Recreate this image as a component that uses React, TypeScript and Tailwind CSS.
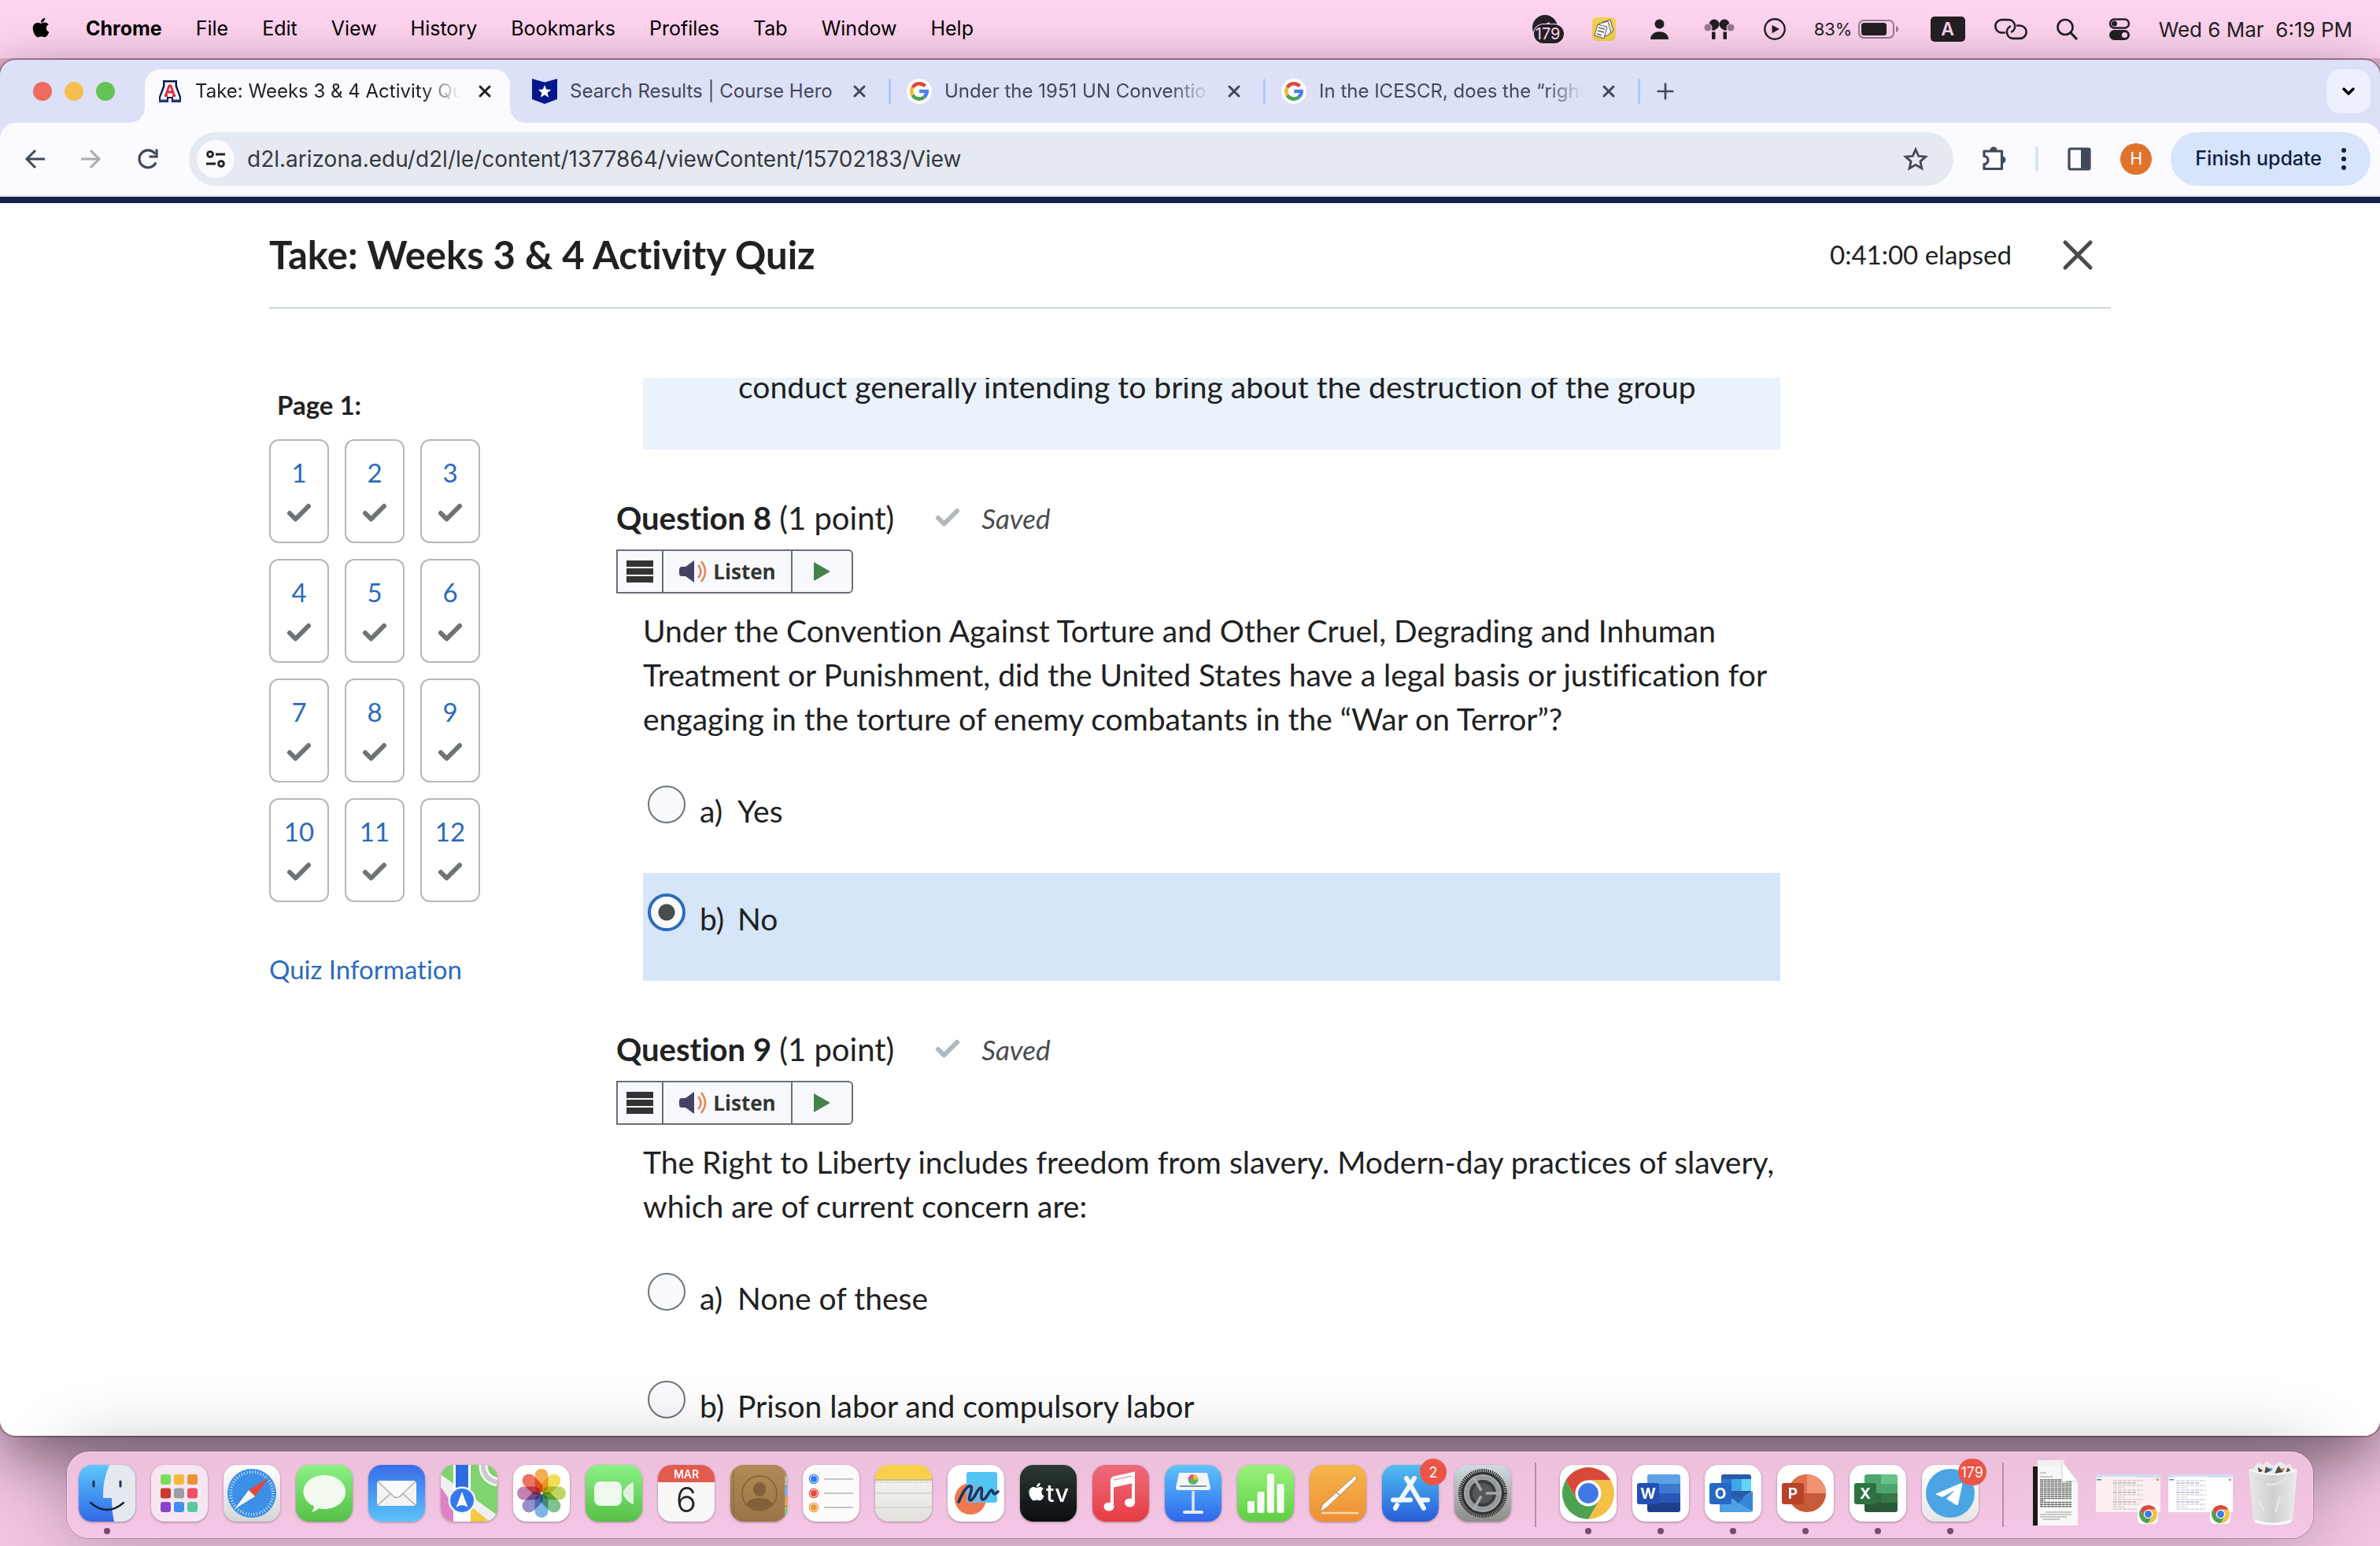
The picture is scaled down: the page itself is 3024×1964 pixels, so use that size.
import type { ReactNode } from "react";
import { Check, ChevronDown, Plus, X } from "lucide-react";
import { FaApple } from "react-icons/fa";
import clsx from "clsx";

const menuItems = ["File", "Edit", "View", "History", "Bookmarks", "Profiles", "Tab", "Window", "Help"];

/* ---------- Logos ---------- */

const GoogleLogo = () => (
  <svg viewBox="0 0 32 32" className="size-8 shrink-0">
    <circle cx="16" cy="16" r="16" fill="#fff" />
    <g fill="none" strokeWidth="4.6">
      <path d="M23.4 9.6A9.7 9.7 0 0 0 7.6 11.2" stroke="#db4a39" />
      <path d="M7.6 11.2A9.7 9.7 0 0 0 7.6 20.8" stroke="#f3b83b" />
      <path d="M7.6 20.8A9.7 9.7 0 0 0 22.4 23.2" stroke="#4ea258" />
      <path d="M22.4 23.2A9.7 9.7 0 0 0 25.7 16H16.2" stroke="#4a80ee" />
    </g>
  </svg>
);

const CourseHeroLogo = () => (
  <svg viewBox="0 0 32 32" className="size-8 shrink-0">
    <path d="M0 0l16 4.5L32 0v26l-16 6-16-6z" fill="#03178c" />
    <path d="M16 8l2.2 5.6 6 .4-4.600 3.800 1.500 5.900L16 20.400l-5.100 3.300 1.500-5.900L7.800 14l6-.4z" fill="#fff" />
  </svg>
);

const ArizonaLogo = () => (
  <svg viewBox="0 0 32 32" className="size-8 shrink-0">
    <path d="M7 2h18v7l5 14v7H18v-5h-4v5H2v-7L7 9z" fill="#0c1a4b" />
    <path d="M9.500 4.500h13v5l5.500 14.500v3h-8v-4h-8v4H4v-3L9.500 9.500z" fill="#f4f6fb" />
    <path d="M10.500 21.500L15 9h2l4.500 12.500M12 17h8M9 21.500h4M19 21.500h4" fill="none" stroke="#dc2f3c" strokeWidth="2.800" />
    <path d="M2 26.500h11v3H2zM19 26.500h11v3H19z" fill="#1e3f78" />
  </svg>
);

const ChromeLogo = ({ className }: { className?: string }) => (
  <svg viewBox="-24 -24 48 48" className={className}>
    <path d="M-19.050-11A22 22 0 0 1 19.050-11L0-11L-9.530 5.500Z" fill="#d8493a" />
    <path d="M-19.050-11A22 22 0 0 1 19.050-11L0-11L-9.530 5.500Z" fill="#f5c043" transform="rotate(120)" />
    <path d="M-19.050-11A22 22 0 0 1 19.050-11L0-11L-9.530 5.500Z" fill="#4da251" transform="rotate(240)" />
    <circle r="11" fill="#fff" />
    <circle r="8.600" fill="#4079e6" />
  </svg>
);

/* ---------- Menu bar ---------- */

const MenuBar = () => (
  <header className="flex h-[74px] shrink-0 items-center bg-[#ffd4f0] pl-[38px] pr-[35px] text-[25px] text-black">
    <nav className="flex items-center gap-[43px]">
      <FaApple className="mb-1 size-7" />
      <span className="font-bold">Chrome</span>
      {menuItems.map((item) => (
        <span key={item}>{item}</span>
      ))}
    </nav>
    <div className="ml-auto flex items-center gap-9 text-[#231f23]">
      {/* Telegram with unread count */}
      <div className="relative h-9 w-10">
        <svg viewBox="0 0 40 36" className="h-9 w-10">
          <circle cx="16" cy="16" r="16" fill="#231f23" />
          <path d="M12 13l10-4-1 5z" fill="#ffd4f0" />
          <rect x="1" y="11" width="40" height="27" rx="13" fill="#ffd4f0" />
          <rect x="2" y="12" width="38" height="24" rx="12" fill="#231f23" />
        </svg>
        <span className="absolute inset-x-0 top-3 text-center text-[20px] leading-6 text-[#ffd4f0]">179</span>
      </div>
      <svg viewBox="0 0 30 30" className="size-[30px]">
        <rect width="30" height="30" rx="6" fill="#f8d24f" />
        <path d="M13 6l10-3 4 14-6 5z" fill="#eee" stroke="#555" strokeWidth="1" />
        <path d="M9 8l11-3 4 15-7 4z" fill="#fff" stroke="#555" strokeWidth="1" />
        <path d="M7 9l12 3-4 15-12-4z" fill="#fff" stroke="#555" strokeWidth="1" />
        <path d="M8 13l8 2M7 17l8 2M6 21l6 2" stroke="#666" strokeWidth="1.400" />
      </svg>
      <svg viewBox="0 0 39 28" className="h-7 w-[39px]" fill="#231f23">
        <circle cx="19.500" cy="7.500" r="6" />
        <path d="M8 27c0-13 23-13 23 0z" />
      </svg>
      <svg viewBox="0 0 41 28" className="h-7 w-[41px]">
        <g>
          <circle cx="14" cy="8" r="6.500" fill="#231f23" />
          <rect x="11" y="8" width="4.500" height="19" rx="1.500" fill="#231f23" />
          <path d="M10.500 16.500h5.500" stroke="#ffd4f0" strokeWidth="2" />
          <circle cx="6" cy="12" r="5" fill="#997a90" stroke="#ffd4f0" />
        </g>
        <g transform="translate(41 0) scale(-1 1)">
          <circle cx="14" cy="8" r="6.500" fill="#231f23" />
          <rect x="11" y="8" width="4.500" height="19" rx="1.500" fill="#231f23" />
          <path d="M10.500 16.500h5.500" stroke="#ffd4f0" strokeWidth="2" />
          <circle cx="6" cy="12" r="5" fill="#997a90" stroke="#ffd4f0" />
        </g>
      </svg>
      <svg viewBox="0 0 28 28" className="size-7">
        <circle cx="14" cy="14" r="12.700" fill="none" stroke="#231f23" strokeWidth="2.400" />
        <path d="M10.500 8.800v10.400l9.500-5.200z" fill="#231f23" />
      </svg>
      <div className="flex w-28 items-center justify-between">
        <span className="text-[22px]">83%</span>
        <svg viewBox="0 0 52 24" className="mr-1 h-6 w-[52px]">
          <rect x="1" y="1" width="44" height="22" rx="6" fill="none" stroke="#997a90" strokeWidth="2" />
          <rect x="4" y="4" width="32" height="16" rx="3.500" fill="#231f23" />
          <path d="M48 8c4 1 4 7 0 8z" fill="#997a90" />
        </svg>
      </div>
      <span className="flex h-8 w-11 items-center justify-center rounded-[5px] bg-[#231f23] text-[23px] font-semibold text-[#ffd4f0]">A</span>
      <svg viewBox="0 0 44 28" className="h-7 w-11" fill="none" stroke="#231f23" strokeWidth="2.600" strokeLinecap="round">
        <path d="M14 18.500H10.500a8.200 8.200 0 0 1 0-16.400H19a8.200 8.200 0 0 1 4 15.300" />
        <path d="M30 9.500h3.500a8.200 8.200 0 0 1 0 16.400H25a8.200 8.200 0 0 1-4-15.300" />
      </svg>
      <svg viewBox="0 0 30 28" className="h-7 w-[30px]" fill="none" stroke="#231f23" strokeLinecap="round">
        <circle cx="11" cy="11.500" r="9.500" strokeWidth="2.600" />
        <path d="M18 18.500l7 7.500" strokeWidth="3.200" />
      </svg>
      <svg viewBox="0 0 28 28" className="size-7">
        <rect x="2" y="1.500" width="24" height="11" rx="5.500" fill="none" stroke="#231f23" strokeWidth="2.400" />
        <circle cx="7.500" cy="7" r="3.500" fill="#231f23" />
        <rect x="1" y="15" width="26" height="13" rx="6.500" fill="#231f23" />
        <circle cx="20.500" cy="21.500" r="3.600" fill="#ffd4f0" />
      </svg>
      <span className="whitespace-pre text-[26px]">Wed 6 Mar  6:19 PM</span>
    </div>
  </header>
);

/* ---------- Browser chrome ---------- */

type TabProps = { icon: ReactNode; title: string; active?: boolean; fade?: boolean };

const Tab = ({ icon, title, active, fade }: TabProps) => (
  <div
    className={clsx(
      "relative flex h-[68px] shrink-0 items-center gap-4 pb-3",
      active ? "mr-2 w-[464px] rounded-t-[20px] bg-[#fafaff] pl-4 text-[#1f2024]" : "w-[476px] pl-5 text-[#42475a]"
    )}
  >
    {active && (
      <>
        <span className="absolute -left-5 bottom-0 size-5 bg-[radial-gradient(circle_at_0_0,transparent_20px,#fafaff_20px)]" />
        <span className="absolute -right-5 bottom-0 size-5 bg-[radial-gradient(circle_at_100%_0,transparent_20px,#fafaff_20px)]" />
      </>
    )}
    {icon}
    <span className={clsx("w-[336px] overflow-hidden whitespace-nowrap text-[24px]", fade && "mask-r-from-[86%] mask-r-to-[100%]")}>
      {title}
    </span>
    <button aria-label={`Close ${title}`} className="flex size-8 items-center justify-center">
      <X className="size-6" strokeWidth={3} />
    </button>
    {!active && <span className="ml-auto h-8 w-[3px] rounded-full bg-[#b0c8fb]" />}
  </div>
);

const TabStrip = () => (
  <div className="flex h-20 shrink-0 items-end bg-[#dce1f7] pl-[42px] pr-3">
    <div className="mr-[38px] flex h-[68px] items-center gap-4 pb-3">
      <button aria-label="Close window" className="size-6 rounded-full bg-[#ed6b5f]" />
      <button aria-label="Minimize window" className="size-6 rounded-full bg-[#f5bf4f]" />
      <button aria-label="Zoom window" className="size-6 rounded-full bg-[#62c454]" />
    </div>
    <Tab active fade icon={<ArizonaLogo />} title="Take: Weeks 3 & 4 Activity Qu" />
    <Tab icon={<CourseHeroLogo />} title="Search Results | Course Hero" />
    <Tab fade icon={<GoogleLogo />} title="Under the 1951 UN Conventio" />
    <Tab fade icon={<GoogleLogo />} title="In the ICESCR, does the “right" />
    <button aria-label="New tab" className="ml-4 flex h-[68px] items-center pb-3 text-[#42475a]">
      <Plus className="size-8" strokeWidth={2} />
    </button>
    <button aria-label="Search tabs" className="mb-3 ml-auto flex size-14 items-center justify-center rounded-[18px] bg-[#edf0ff]">
      <ChevronDown className="size-6" strokeWidth={3.5} />
    </button>
  </div>
);

const Toolbar = () => (
  <div className="bg-[#dce1f7]">
    <div className="flex h-[94px] items-center rounded-t-[20px] border-b-2 border-[#dde1ea] bg-[#fafaff] pl-[30px] pr-3 text-[#41485b]">
      <button aria-label="Back" className="mr-10">
        <svg viewBox="0 0 30 30" className="size-[30px]" fill="none" stroke="#41485b" strokeWidth="3">
          <path d="M27 15H5M15 4L4 15l11 11" />
        </svg>
      </button>
      <button aria-label="Forward" className="mr-[42px]">
        <svg viewBox="0 0 30 30" className="size-[30px]" fill="none" stroke="#a8abb2" strokeWidth="3">
          <path d="M3 15h22M15 4l11 11-11 11" />
        </svg>
      </button>
      <button aria-label="Reload" className="mr-9">
        <svg viewBox="0 0 32 32" className="size-8" fill="none" stroke="#41485b" strokeWidth="3.200">
          <path d="M26 20.500A11 11 0 1 1 25 9.500" />
          <path d="M27 3.500v9.500h-9.500" />
        </svg>
      </button>
      <div className="flex h-[68px] flex-1 items-center rounded-full bg-[#e5e9f1] pl-2.5 pr-8">
        <button aria-label="View site information" className="mr-4 flex size-12 items-center justify-center rounded-full bg-[#fafaff]">
          <svg viewBox="0 0 26 26" className="size-[26px]" fill="none" stroke="#1f2024" strokeWidth="2.800">
            <circle cx="6" cy="7" r="3.400" />
            <path d="M13 7h12M1 19h12" />
            <circle cx="20" cy="19" r="3.400" />
          </svg>
        </button>
        <input
          aria-label="Address"
          className="min-w-0 flex-1 bg-transparent text-[28px] text-[#35383d] outline-none"
          defaultValue="d2l.arizona.edu/d2l/le/content/1377864/viewContent/15702183/View"
        />
        <button aria-label="Bookmark this tab">
          <svg viewBox="0 0 32 32" className="size-8" fill="none" stroke="#44474e" strokeWidth="2.800">
            <path d="M16 4l3.700 8.300 9 .8-6.800 6 2 8.900L16 23.300 8.100 28l2-8.900-6.800-6 9-.8z" />
          </svg>
        </button>
      </div>
      <button aria-label="Extensions" className="ml-9">
        <svg viewBox="0 0 36 36" className="size-9">
          <path d="M3 7h22.500v22.500H3V23.500a5 5 0 0 0 0-10z" transform="translate(0 1)" fill="none" stroke="#41485b" strokeWidth="3.200" strokeLinejoin="round" />
          <path d="M10.500 7a4.500 4.500 0 0 1 9 0zM26 14.500a4.500 4.500 0 0 1 0 9z" fill="#41485b" />
        </svg>
      </button>
      <span className="ml-8 h-8 w-1 rounded-full bg-[#d7e4fc]" />
      <button aria-label="Side panel" className="ml-9">
        <svg viewBox="0 0 32 32" className="size-8">
          <rect x="3" y="3" width="26" height="26" rx="2" fill="none" stroke="#41485b" strokeWidth="3.200" />
          <path d="M18 2h12v28H18z" fill="#41485b" />
        </svg>
      </button>
      <button className="ml-9 flex size-10 items-center justify-center rounded-full bg-[#df732b] text-[21px] text-white">H</button>
      <button className="ml-6 flex h-[68px] items-center gap-6 rounded-full bg-[#d7e4fc] pl-[31px] pr-[30px] text-[25px] font-medium text-[#0d1f45]">
        Finish update
        <svg viewBox="0 0 8 32" className="h-8 w-2" fill="#0d1f45">
          <circle cx="4" cy="5" r="3" />
          <circle cx="4" cy="16" r="3" />
          <circle cx="4" cy="27" r="3" />
        </svg>
      </button>
    </div>
  </div>
);

/* ---------- Quiz page ---------- */

const CheckMark = ({ className }: { className: string }) => <Check className={className} strokeWidth={4} />;

const QuizNav = () => (
  <aside className="w-[441px] shrink-0 pt-[15px]">
    <h2 className="ml-2.5 text-[33px] font-bold leading-[38px]">Page 1:</h2>
    <div className="mt-[25px] grid w-[268px] grid-cols-3 gap-5">
      {Array.from({ length: 12 }, (_, i) => (
        <button
          key={i}
          className="flex h-[132px] flex-col items-center rounded-[12px] border-2 border-[#b1b9be] pt-[18px] text-[33px] leading-[44px] text-[#2b6bbd]"
        >
          {i + 1}
          <CheckMark className="mt-3 size-9 text-[#6e7376]" />
        </button>
      ))}
    </div>
    <a href="#info" className="mt-[65px] block text-[33px] leading-10 text-[#2b6bbd]">
      Quiz Information
    </a>
  </aside>
);

const ListenBar = () => (
  <div className="mt-3 flex h-14 w-[301px] rounded-r-[6px] border-2 border-[#6a6f78] bg-[#f8f9fe]">
    <button aria-label="Listen menu" className="flex w-[58px] items-center justify-center border-r-2 border-[#6a6f78]">
      <svg viewBox="0 0 34 28" className="h-7 w-[34px]" fill="#333">
        <rect width="34" height="8" />
        <rect y="10" width="34" height="8" />
        <rect y="20" width="34" height="8" />
      </svg>
    </button>
    <button className="flex flex-1 items-center justify-center gap-1.5 border-r-2 border-[#6a6f78] font-['Open_Sans',sans-serif] text-[26px] font-bold text-[#333]">
      <svg viewBox="0 0 38 30" className="h-[30px] w-[38px]">
        <path d="M2 9h7l11-8v28l-11-8H4q-3 0-3-4v-4q0-4 3-4z" fill="#454263" />
        <path d="M25 7q7 8 0 16M29 2q10 13 0 26" fill="none" stroke="#e88457" strokeWidth="2.600" />
      </svg>
      Listen
    </button>
    <button aria-label="Play" className="flex w-[75px] items-center justify-center">
      <svg viewBox="0 0 21 24" className="h-6 w-[21px]">
        <path d="M0 0l21 12L0 24z" fill="#43824a" />
      </svg>
    </button>
  </div>
);

type Answer = { letter: string; text: string; checked?: boolean };

const Option = ({ name, letter, text, checked }: Answer & { name: string }) => (
  <label className={clsx("flex h-[137px] items-start pl-1.5", checked && "bg-[#d7e5f8]")}>
    <input
      type="radio"
      name={name}
      defaultChecked={checked}
      className="mt-[26px] size-12 shrink-0 appearance-none rounded-full border-2 border-[#6e7477] bg-[#f9fafe] checked:border-4 checked:border-[#2b6bbd] checked:bg-[radial-gradient(circle,#494c4e_10px,#f9fafe_11px)]"
    />
    <span className="ml-[18px] mt-[30px] w-12">{letter})</span>
    <span className="mt-[30px]">{text}</span>
  </label>
);

const Question = ({ number, text, answers }: { number: number; text: string; answers: Answer[] }) => (
  <article className="pt-[59px]">
    <div className="flex items-center">
      <h2 className="text-[40px] leading-[56px]">
        <strong className="font-bold">Question {number}</strong> (1 point)
      </h2>
      <CheckMark className="ml-[50px] size-9 text-[#b1b9be]" />
      <em className="ml-[25px] text-[35px] text-[#494c4e]">Saved</em>
    </div>
    <ListenBar />
    <div className="ml-[34px] mt-[19px]">
      <p className="mb-[31px]">{text}</p>
      {answers.map((answer) => (
        <Option key={answer.letter} name={`question-${number}`} {...answer} />
      ))}
    </div>
  </article>
);

const QuizPage = () => (
  <main className="flex min-h-0 flex-1 flex-col border-t-8 border-[#122347] bg-white font-[Lato,sans-serif] text-[#202122] [font-variant-ligatures:none]">
    <div className="mx-auto flex min-h-0 w-full max-w-[2340px] flex-1 flex-col">
      <div className="flex h-[134px] shrink-0 items-center border-b-2 border-[#cdd5dc] pr-[22px]">
        <h1 className="text-[49px] font-bold">Take: Weeks 3 &amp; 4 Activity Quiz</h1>
        <span className="ml-auto text-[33px]">0:41:00 elapsed</span>
        <button aria-label="Close" className="ml-16">
          <svg viewBox="0 0 40 40" className="size-10" stroke="#494c4e" strokeWidth="5" strokeLinecap="round">
            <path d="M4 4l32 32M36 4L4 36" />
          </svg>
        </button>
      </div>
      <div className="mt-[88px] flex min-h-0 flex-1">
        <QuizNav />
        <section className="min-w-0 flex-1 overflow-hidden pr-[420px] text-[39px] leading-[56px]">
          <div className="ml-[34px] flex h-[91px] flex-col justify-end overflow-hidden bg-[#eaf2fc] pb-[52px] pl-[121px]">
            <p>conduct generally intending to bring about the destruction of the group</p>
          </div>
          <Question
            number={8}
            text="Under the Convention Against Torture and Other Cruel, Degrading and Inhuman Treatment or Punishment, did the United States have a legal basis or justification for engaging in the torture of enemy combatants in the “War on Terror”?"
            answers={[
              { letter: "a", text: "Yes" },
              { letter: "b", text: "No", checked: true },
            ]}
          />
          <Question
            number={9}
            text="The Right to Liberty includes freedom from slavery. Modern-day practices of slavery, which are of current concern are:"
            answers={[
              { letter: "a", text: "None of these" },
              { letter: "b", text: "Prison labor and compulsory labor" },
            ]}
          />
        </section>
      </div>
    </div>
  </main>
);

/* ---------- Dock ---------- */

type DockIconProps = { bg?: string; running?: boolean; badge?: string; children: ReactNode };

const DockIcon = ({ bg = "bg-white", running, badge, children }: DockIconProps) => (
  <div className="relative flex h-full w-[92px] shrink-0 justify-center pt-4">
    <div className={clsx("size-[72px] overflow-hidden rounded-[17px] shadow-[0_1px_3px_rgba(0,0,0,0.35)]", bg)}>
      <svg viewBox="0 0 72 72" className="size-full">
        {children}
      </svg>
    </div>
    {running && <span className="absolute bottom-1 left-[42px] size-2 rounded-full bg-[#7a4a6c]" />}
    {badge && (
      <span className="absolute right-0 top-2 flex h-[34px] min-w-[34px] items-center justify-center rounded-full bg-[#ec5545] px-1 text-[18px] text-white">
        {badge}
      </span>
    )}
  </div>
);

const Divider = () => (
  <div className="flex h-full w-[42px] shrink-0 items-center justify-center">
    <span className="h-[82px] w-0.5 bg-[#b98aab]" />
  </div>
);

const petals = ["#f4a13c", "#f0d93f", "#b5cf4a", "#6cba7d", "#6cabe0", "#8a7fc8", "#bd6fa8", "#ea5f4c"];
const launchpad = ["#7bdc5c", "#f5b93c", "#ec9235", "#c93a2c", "#9a9ea3", "#ee4f67", "#8a44c8", "#3f8ff0", "#5cc8a0"];

const OfficeTile = ({ letter, color }: { letter: string; color: string }) => (
  <>
    <rect x="6" y="23" width="28" height="27" rx="3" fill={color} />
    <text x="20" y="43" textAnchor="middle" fill="#fff" fontSize="19" fontWeight="700">
      {letter}
    </text>
  </>
);

const Thumbnail = ({ bg, line, inset }: { bg: string; line: string; inset: number }) => (
  <div className="relative flex h-full w-[92px] shrink-0 items-start justify-center pt-7">
    <svg viewBox="0 0 82 48" className="h-12 w-[82px]">
      <rect width="82" height="48" fill={bg} />
      <rect width="82" height="4" fill="#cfdcf8" />
      <path d="M8 3.500h44" stroke="#f4f6fe" strokeWidth="1" />
      {Array.from({ length: 13 }, (_, i) => (
        <path key={i} d={`M${inset} ${8 + i * 3}h${i % 4 === 3 ? 14 : i % 2 ? 30 : 38}`} stroke={i % 4 === 1 ? line : "#c4bfc3"} strokeWidth="1" strokeDasharray="5 1" />
      ))}
      <rect x="1" y="6" width="6" height="1.500" fill="#5a7fd0" />
      <rect x="77" y="5.500" width="3" height="2.500" fill="#ec8544" />
    </svg>
    <span className="absolute right-2 top-[65px] flex size-[26px] items-center justify-center rounded-[6px] bg-white">
      <ChromeLogo className="size-[25px]" />
    </span>
  </div>
);

const Dock = () => (
  <footer className="relative z-10 mx-auto mb-2.5 mt-5 flex h-[110px] shrink-0 rounded-[28px] border border-[#f7d3ea] bg-linear-to-b from-[#ecc0db] to-[#f5c6e6] px-1 shadow-[0_0_0_1px_rgba(90,50,80,0.3),0_0_90px_rgba(0,0,0,0.28)]">
    <DockIcon running bg="bg-linear-to-b from-[#5fc6f9] to-[#3466e8]">
      <path d="M39 0h33v72H45q-3-13-3-30H31Q30 20 39 0z" fill="#e4e9f0" />
      <path d="M19 21v6M53 21v6" stroke="#26324a" strokeWidth="3" strokeLinecap="round" />
      <path d="M15 48q21 18 42 0" fill="none" stroke="#16202e" strokeWidth="2.400" strokeLinecap="round" />
    </DockIcon>
    <DockIcon bg="bg-[#f5e6f1]">
      {launchpad.map((color, i) => (
        <rect key={color} x={12 + (i % 3) * 17} y={12 + Math.floor(i / 3) * 17.5} width="13" height="13" rx="3" fill={color} />
      ))}
    </DockIcon>
    <DockIcon bg="bg-linear-to-b from-white to-[#d6d6d6]">
      <circle cx="36" cy="36" r="31" fill="#3c8fe6" />
      <circle cx="36" cy="36" r="27" fill="none" stroke="#cfe6fb" strokeWidth="4" strokeDasharray="1 2.530" />
      <path d="M58 16L40 40l-8-8z" fill="#e4473b" />
      <path d="M14 56l18-24 8 8z" fill="#f5f5f5" />
    </DockIcon>
    <DockIcon bg="bg-linear-to-b from-[#8bf184] to-[#55c046]">
      <path d="M36 13c15 0 27 9 27 21.500S51 56 36 56q-4 0-7-1-4 4-9 4.500 3-3 3-7C15 49 9.500 42 9.500 34.500 9.500 22 21 13 36 13z" fill="#f2faf0" />
    </DockIcon>
    <DockIcon bg="bg-linear-to-b from-[#3a6ce8] to-[#5cc3fa]">
      <rect x="11" y="20" width="50" height="32" rx="4" fill="#f4f4f4" />
      <path d="M12 51l19-17M60 51L41 34" stroke="#a9a9a9" strokeWidth="1.400" />
      <path d="M12 21l20 19q4 3 8 0l20-19" fill="#fbfbfb" stroke="#a9a9a9" strokeWidth="1.400" />
    </DockIcon>
    <DockIcon bg="bg-[#80d36e]">
      <path d="M0 12l72 52v8H0z" fill="#f0f0f4" />
      <path d="M0 28l30 44H0z" fill="#dd82c4" />
      <path d="M38 52l24 20H38z" fill="#f6c944" />
      <path d="M54 0q0 18 18 22" fill="none" stroke="#fff" strokeWidth="11" />
      <path d="M54 0q0 18 18 22" fill="none" stroke="#c9cbd2" strokeWidth="6" />
      <path d="M16 0h22v72H16z" fill="#fff" />
      <path d="M19 0h16v44H19z" fill="#2f6be0" />
      <circle cx="27" cy="45" r="17.500" fill="#f3f5fa" />
      <circle cx="27" cy="45" r="15" fill="#3478f0" />
      <path d="M27 34l7.500 20q-7.500-6-15 0z" fill="#fff" />
    </DockIcon>
    <DockIcon>
      {petals.map((color, i) => (
        <rect key={color} x="27.500" y="5" width="17" height="30" rx="8.500" fill={color} opacity="0.880" transform={`rotate(${i * 45} 36 36)`} className="mix-blend-multiply" />
      ))}
    </DockIcon>
    <DockIcon bg="bg-linear-to-b from-[#8bf184] to-[#55c046]">
      <rect x="11" y="21" width="35" height="31" rx="8" fill="#eef8ec" />
      <path d="M48 33q8-11 13-11v28q-5 0-13-11z" fill="#e0f2dc" />
    </DockIcon>
    <DockIcon bg="bg-[#f9f8f7]">
      <rect width="72" height="22" fill="#e25b4e" />
      <text x="36" y="17" textAnchor="middle" fill="#fff" fontSize="14" fontWeight="600">MAR</text>
      <text x="36" y="60" textAnchor="middle" fill="#222" fontSize="44" fontWeight="300">6</text>
    </DockIcon>
    <DockIcon bg="bg-linear-to-b from-[#b08b56] to-[#9a7446]">
      <path d="M4 0v72" stroke="#86643a" strokeWidth="1" />
      <circle cx="37" cy="36" r="22" fill="none" stroke="#82603a" strokeWidth="1.600" />
      <ellipse cx="37" cy="31" rx="8" ry="9" fill="#82603a" />
      <path d="M20 50q4-8 17-8t17 8q-7 8-17 8t-17-8z" fill="#82603a" />
      <path d="M69 14h3v12h-3z" fill="#b9b9b9" />
      <path d="M69 27h3v12h-3z" fill="#5fb6ee" />
      <path d="M69 40h3v12h-3z" fill="#f09a3c" />
      <path d="M69 53h3v10h-3z" fill="#72d068" />
    </DockIcon>
    <DockIcon bg="bg-[#fcfbfa]">
      {["#3478f0", "#e5493c", "#ee9a36"].map((color, i) => (
        <g key={color}>
          <circle cx="14" cy={18 + i * 18} r="5.600" fill="none" stroke={color} strokeWidth="1.200" />
          <circle cx="14" cy={18 + i * 18} r="4" fill={color} />
          <path d={`M27 ${18 + i * 18}h37`} stroke="#b4b4b4" strokeWidth="1.600" />
        </g>
      ))}
    </DockIcon>
    <DockIcon bg="bg-linear-to-b from-[#f8f7f4] to-[#e2e1da]">
      <rect width="72" height="18" fill="#f7cf4a" />
      <path d="M0 19h72" stroke="#b8a777" strokeWidth="1.600" />
      <path d="M0 22h72" stroke="#b5b3ac" strokeWidth="1.400" strokeDasharray="1.200 1.800" />
      <path d="M0 36h72M0 54h72" stroke="#d2d1cc" strokeWidth="1.400" />
    </DockIcon>
    <DockIcon>
      <circle cx="29" cy="43" r="20" fill="#f0774e" />
      <rect x="24" y="9" width="39" height="39" rx="3" fill="#52c5f3" />
      <path d="M24 24a20 20 0 0 1 24 24H27q-3 0-3-3z" fill="#7cb2e0" />
      <path d="M14 47c6-14 11-21 15-20 5 1-5 18 0 18s9-16 13-16-2 15 3 15 8-13 11-12 0 9 8 2" fill="none" stroke="#17365f" strokeWidth="3.600" strokeLinecap="round" />
    </DockIcon>
    <DockIcon bg="bg-linear-to-b from-[#2c3a37] to-[#0b0e10]">
      <g transform="translate(8 21)">
        <FaApple size={26} color="#fff" />
      </g>
      <text x="33" y="47" fill="#fff" fontSize="31" fontWeight="500">tv</text>
    </DockIcon>
    <DockIcon bg="bg-linear-to-b from-[#ee6a7a] to-[#e63a42]">
      <path d="M25 17l27-6v37" fill="none" stroke="#fff" strokeWidth="4" />
      <path d="M25 20l27-6v9l-27 6z" fill="#fff" />
      <path d="M25 17v36" stroke="#fff" strokeWidth="4" />
      <ellipse cx="21" cy="53" rx="6.500" ry="5.500" fill="#fff" />
      <ellipse cx="47.500" cy="48" rx="6.500" ry="5.500" fill="#fff" />
    </DockIcon>
    <DockIcon bg="bg-linear-to-b from-[#5fc2f8] to-[#3266ec]">
      <path d="M18 10h36l4 19q0 3-3 3H17q-3 0-3-3z" fill="#f3f5f8" />
      <path d="M19 27h34" stroke="#8294a8" strokeWidth="2" />
      <circle cx="36" cy="18.500" r="6.500" fill="#55b957" />
      <path d="M36 18.500V12a6.500 6.500 0 0 1 6.500 6.500z" fill="#f0b93c" />
      <path d="M36 18.500V12a6.500 6.500 0 0 0-6.500 6.500z" fill="#e0558a" />
      <path d="M36 33v26" stroke="#dfe3e8" strokeWidth="3.600" />
      <path d="M25 60h22" stroke="#e9ecf0" strokeWidth="4" strokeLinecap="round" />
    </DockIcon>
    <DockIcon bg="bg-linear-to-b from-[#98f27a] to-[#5fcf44]">
      <g fill="#f6fbf4">
        <rect x="13" y="46" width="9" height="15" rx="2" />
        <rect x="25.500" y="34" width="9" height="27" rx="2" />
        <rect x="38" y="11" width="9" height="50" rx="2" />
        <rect x="50.500" y="24" width="9" height="37" rx="2" />
      </g>
    </DockIcon>
    <DockIcon bg="bg-linear-to-b from-[#f6b64a] to-[#ef8e38]">
      <path d="M57 14q4 0 2 5L22 54l-9 6 3-9z" fill="#f8f8f8" stroke="#a6733a" strokeWidth="0.800" />
      <path d="M34 35l5 4" stroke="#999" strokeWidth="1.600" />
      <path d="M16 61h45" stroke="#fbd9a4" strokeWidth="2.600" strokeLinecap="round" />
    </DockIcon>
    <DockIcon badge="2" bg="bg-linear-to-b from-[#54bdf2] to-[#2a5cd8]">
      <g stroke="#f4f8fd" strokeWidth="6" strokeLinecap="round">
        <path d="M41 17L23 45M31 17l22 38M14 44.500h22M50 44.500h8M19 51l-2 4" />
      </g>
    </DockIcon>
    <DockIcon bg="bg-linear-to-b from-[#cfdbe3] to-[#8d8c88]">
      <circle cx="36" cy="36" r="28" fill="none" stroke="#333" strokeWidth="6" strokeDasharray="1.600 1" />
      <circle cx="36" cy="36" r="24" fill="#9a9c9d" stroke="#2f3031" strokeWidth="6" />
      <circle cx="36" cy="36" r="15" fill="#55585a" stroke="#3a3c3d" strokeWidth="4" />
      <path d="M36 36h24M36 36L24 15M36 36L24 57" stroke="#a5a8aa" strokeWidth="3.600" />
      <circle cx="36" cy="36" r="4" fill="#55585a" />
      <circle cx="36" cy="36" r="22.500" fill="none" stroke="#a5a8aa" strokeWidth="3" />
    </DockIcon>
    <Divider />
    <DockIcon running>
      <ChromeLogo />
    </DockIcon>
    <DockIcon running>
      <path d="M19 15q0-3 3-3h36q3 0 3 3v9H19z" fill="#5ea1e6" />
      <path d="M19 24h42v12H19z" fill="#3f78cf" />
      <path d="M19 36h42v12H19z" fill="#2b57b8" />
      <path d="M19 48h42v9q0 3-3 3H22q-3 0-3-3z" fill="#1e3f8e" />
      <OfficeTile letter="W" color="#2350b4" />
    </DockIcon>
    <DockIcon running>
      <rect x="21" y="12" width="38" height="44" rx="3" fill="#2a5ca8" />
      <path d="M21 18h13v15H21z" fill="#2a76d0" />
      <path d="M34 18h13v15H34z" fill="#42a5ec" />
      <path d="M47 18h12v15H47z" fill="#64d4fb" />
      <path d="M19 60h38q4 0 4-4V33L40 46 19 33z" fill="#4da2e4" />
      <path d="M40 46l21 13V34z" fill="#3a86d4" />
      <path d="M34 41h16l-7 8z" fill="#2863b8" />
      <OfficeTile letter="O" color="#2667c4" />
    </DockIcon>
    <DockIcon running>
      <circle cx="38" cy="36" r="24" fill="#c75a39" />
      <path d="M38 12a24 24 0 0 0-24 24h24z" fill="#e0704c" />
      <path d="M38 12a24 24 0 0 1 24 24H38z" fill="#f09373" />
      <OfficeTile letter="P" color="#b8432a" />
    </DockIcon>
    <DockIcon running>
      <path d="M19 15q0-3 3-3h18v24H19z" fill="#4ea56c" />
      <path d="M40 12h18q3 0 3 3v9H40z" fill="#66c288" />
      <path d="M40 24h21v12H40z" fill="#4fa56d" />
      <path d="M40 36h21v12H40z" fill="#377a46" />
      <path d="M19 36h21v12H19z" fill="#2f6b40" />
      <path d="M19 48h42v9q0 3-3 3H22q-3 0-3-3z" fill="#2b5a38" />
      <OfficeTile letter="X" color="#2d7341" />
    </DockIcon>
    <DockIcon running badge="179" bg="bg-linear-to-b from-white to-[#e6e6e6]">
      <circle cx="36" cy="36" r="31" fill="#4ba5e4" />
      <path d="M17 37l33-14q2 0 1 3l-5 24q-1 2-4 0L31 43l11-11-16 9z" fill="#fff" />
    </DockIcon>
    <Divider />
    <div className="flex h-full w-[92px] shrink-0 justify-center pt-2.5">
      <svg viewBox="0 0 58 84" className="h-[84px] w-[58px]">
        <rect x="6" y="0" width="34" height="20" fill="#f2f2f2" />
        <path d="M1 8h38l18 20v55H1z" fill="#f7f7f7" />
        <rect x="0" y="8" width="6" height="75" fill="#1a1a1a" />
        {Array.from({ length: 14 }, (_, i) => (
          <path key={i} d={`M9 ${25 + i * 2.6}h${i === 10 ? 6 : 40}`} stroke="#666" strokeWidth="1.500" strokeDasharray="4 0.600" />
        ))}
        <path d="M16 66h33M9 69h40M9 72h34M12 75h22M9 16h8M9 21h16" stroke="#999" strokeWidth="1" />
        <path d="M37 1l20 26q-10-2-20 1z" fill="#fff" stroke="#d0d0d0" strokeWidth="1" />
      </svg>
    </div>
    <Thumbnail bg="#fceff0" line="#9a8f96" inset={22} />
    <Thumbnail bg="#ffffff" line="#8a90da" inset={10} />
    <div className="flex h-full w-[92px] shrink-0 justify-center pt-2.5">
      <svg viewBox="0 0 62 84" className="h-[84px] w-[62px]">
        <defs>
          <linearGradient id="bin" x1="0" x2="1">
            <stop offset="0" stopColor="#e9e9eb" />
            <stop offset="0.500" stopColor="#cfcfd1" />
            <stop offset="1" stopColor="#ececee" />
          </linearGradient>
        </defs>
        <path d="M4 12l8-9 7 3 4-5 8 6 9-5 8 4 4-2 7 10-10 8H12z" fill="#eceae8" />
        <path d="M12 9l6 4-5 4zM22 8l7 5-9 4zM38 7l6 8-11 2zM50 9l4 6-7 1z" fill="#4c4a4a" />
        <path d="M26 9l5 2-3 3z" fill="#49a7d8" />
        <path d="M40 11l6-1-2 4z" fill="#d0793e" />
        <path d="M0 12q31 12 62 0l-6 64q-2 6-25 6T6 76z" fill="url(#bin)" />
        <path d="M1 12q30 12 60 0" fill="none" stroke="#f8f8f8" strokeWidth="2" />
        <path d="M22 30q14 4 28-9M12 50l8 14M40 46l-6 20" fill="none" stroke="#e4e4e6" strokeWidth="3" />
        <path d="M7 75q24 9 48 0l-1 4q-22 7-46 0z" fill="#fafafa" />
      </svg>
    </div>
  </footer>
);

export default function App() {
  return (
    <div className="flex h-screen flex-col overflow-hidden bg-[#f2c4e2] font-[Inter,sans-serif]">
      <MenuBar />
      <div className="flex min-h-0 flex-1 flex-col bg-linear-to-b from-[#dcb0ca] to-transparent pt-0.5">
        <div className="flex min-h-0 flex-1 flex-col overflow-hidden rounded-[20px] shadow-[0_0_0_2px_rgba(60,30,50,0.35),0_25px_80px_rgba(0,0,0,0.55)]">
          <TabStrip />
          <Toolbar />
          <QuizPage />
        </div>
      </div>
      <Dock />
    </div>
  );
}
